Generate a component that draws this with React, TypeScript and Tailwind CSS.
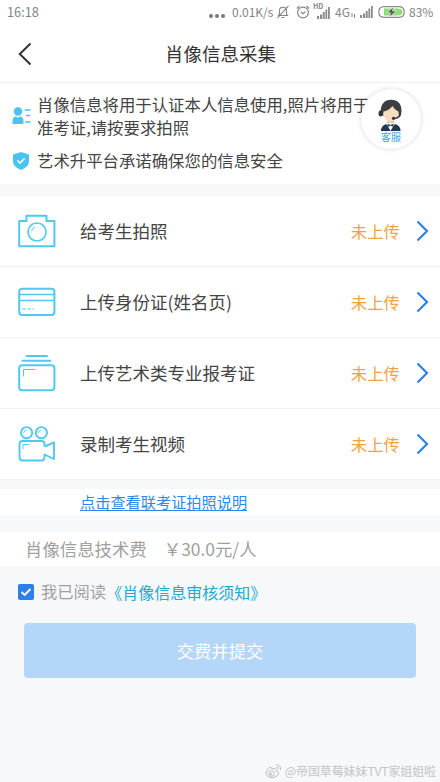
const items = [
  { title: '给考生拍照', icon: CameraIcon },
  { title: '上传身份证(姓名页)', icon: CardIcon },
  { title: '上传艺术类专业报考证', icon: FolderIcon },
  { title: '录制考生视频', icon: VideoIcon },
]

function CameraIcon() {
  return (
    <svg width="38" height="34" viewBox="0 0 38 34" fill="none" stroke="#52c8ee" strokeWidth="2" strokeLinejoin="round">
      <path d="M1.2 7H8.5V1.8H28.5V7H36.4V32.3H1.2Z" />
      <circle cx="19" cy="18" r="9" strokeWidth="1.6" />
      <path d="M13.6 17Q14.4 13.7 17 13.1" strokeWidth="1" />
    </svg>
  )
}

function CardIcon() {
  return (
    <svg width="38" height="30" viewBox="0 0 38 30" fill="none" stroke="#52c8ee" strokeWidth="2">
      <rect x="1.2" y="1.8" width="35.2" height="26.2" rx="3" />
      <path d="M1 7.5H37M1 13.5H37" strokeWidth="1.3" />
      <path d="M4 22H8M9.5 22H13M14.5 22H16" strokeWidth="1.2" />
    </svg>
  )
}

function FolderIcon() {
  return (
    <svg width="38" height="38" viewBox="0 0 38 38" fill="none" stroke="#52c8ee" strokeWidth="2" strokeLinecap="round">
      <path d="M8.5 2H29M4.5 6.7H32.5" strokeWidth="1.9" />
      <rect x="1.2" y="11.2" width="35.2" height="25" rx="3" />
      <path d="M5.5 22V15.5H17" strokeWidth="1" />
    </svg>
  )
}

function VideoIcon() {
  return (
    <svg width="38" height="36" viewBox="0 0 38 36" fill="none" stroke="#52c8ee" strokeWidth="1.9" strokeLinejoin="round">
      <circle cx="8.6" cy="6.7" r="5.6" />
      <circle cx="23.4" cy="6.7" r="5.6" />
      <path d="M26.5 20.5V18Q26.5 15 23.5 15H4.5Q1.5 15 1.5 18V31Q1.5 34.5 4.5 34.5H23.5Q26.5 34.5 26.5 31.5V28.5L36 33V16.5L26.5 20.5" />
      <path d="M5.5 7Q6 4.5 8.5 4M20 7Q20.5 4.5 23 4M5 23V18.5H11" strokeWidth="1" />
    </svg>
  )
}

function Signal() {
  return (
    <svg width="13" height="12" viewBox="0 0 13 12" fill="#8b8b8b">
      <path d="M0 9h2v3H0zM3 7.5h2V12H3zM5.7 5h2v7h-2zM8.4 2.5h1.8V12H8.4zM11 0h1.8v12H11z" />
    </svg>
  )
}

function StatusBar() {
  return (
    <div className="flex h-6 items-center pl-[7px] text-xs text-[#858585]">
      <span className="w-[202px] text-[12.8px]">16:18</span>
      <span className="flex w-[23px] gap-[2px] pt-[7px]">
        <i className="size-[4px] rounded-full bg-[#777]" />
        <i className="size-[4px] rounded-full bg-[#777]" />
        <i className="size-[4px] rounded-full bg-[#777]" />
      </span>
      <span className="w-11 whitespace-nowrap">0.01K/s</span>
      <svg width="14" height="14" viewBox="0 0 13 14" fill="none" stroke="#858585" strokeWidth="1.1">
        <path d="M2 10.5H11L10 9V5.5Q10 2.2 6.5 2.2Q3 2.2 3 5.5V9ZM5 12.5H8M12 .8L1 12.8" />
      </svg>
      <svg className="ml-[6px]" width="14" height="14" viewBox="0 0 14 14" fill="none" stroke="#858585" strokeWidth="1.2">
        <circle cx="7" cy="7.5" r="5.4" />
        <path d="M.8 3.5L3.5 1M10.5 1L13.2 3.5M4.8 6.8L7 8.8L9.3 6.6" />
      </svg>
      <span className="ml-[3px] flex h-5 w-[17px] flex-col items-end">
        <span className="h-[5px] self-start text-[7px] leading-[8px] font-bold">HD</span>
        <Signal />
      </span>
      <span className="ml-[5px] w-[15px]">4G</span>
      <svg className="mt-[6px] mr-1 ml-px" width="5" height="5" viewBox="0 0 5 5" stroke="#858585">
        <path d="M1 0V4M3.5 1V5" />
      </svg>
      <Signal />
      <svg className="ml-[5px]" width="27" height="12" viewBox="0 0 27 12">
        <path d="M6 .7H21Q26.2 .7 26.2 6T21 11.3H6Q.8 11.3 .8 6T6 .7Z" fill="#fff" stroke="#8a8a8a" strokeWidth="1.2" />
        <path d="M6 2.5H20Q24.5 2.5 24.5 6T20 9.5H6Z" fill="#8bdf76" />
        <path d="M15.5 .8L9 6.8H12.5L11 11.2L18.5 5H14.5Z" fill="#555" stroke="#fff" strokeWidth=".6" />
      </svg>
      <span className="ml-[4px]">83%</span>
    </div>
  )
}

function ServiceButton() {
  return (
    <div className="absolute top-[6px] right-[19px] flex size-[60px] flex-col items-center rounded-full bg-white pt-[10px] shadow-[0_0_5px_rgba(0,0,0,0.16)]">
      <svg width="26" height="32" viewBox="0 0 26 32">
        <path d="M9 19H16V26L12.5 29L9 26Z" fill="#f0c8a3" />
        <path d="M5 11Q11 11 14.5 6.5Q16.5 10.5 20.5 12Q21 17 17.5 20.5Q13 24.5 9 21.5Q5 18 5 11Z" fill="#f8dcc0" />
        <path d="M2.5 13Q3 1 13 .8Q23.5 1 23.5 12Q23.5 16.5 20.5 18.5Q21 14.5 20.3 12.5Q16.5 11 14.5 7Q11 11.5 5.5 12.5Q5 15 5.5 17Q2.5 16 2.5 13Z" fill="#3c3e44" />
        <path d="M3 32Q3 26.5 8.5 25L12.5 29L17 25Q22.5 26.5 22.5 32Z" fill="#20394f" />
        <path d="M8.8 25L12.5 32L16.5 25L14.5 24H10.5Z" fill="#fff" />
        <path d="M9.8 24.5L12.5 26L15.5 24.5V28L12.5 26.8L9.8 28Z" fill="#334f67" />
        <rect x=".6" y="11.5" width="4" height="6" rx="2" fill="#30333a" />
        <path d="M22.5 15Q21.5 19 16 19.5" fill="none" stroke="#30333a" strokeWidth="1.2" />
        <circle cx="15.5" cy="19.3" r="1.6" fill="#30333a" />
      </svg>
      <span className="text-[10px] leading-[12px] text-[#38a8d8]">客服</span>
    </div>
  )
}

function Notice() {
  return (
    <section className="relative h-[101px] bg-white pt-[10px] pl-3 text-[16.4px] leading-[23px] text-[#444]">
      <div className="flex items-center">
        <svg className="mr-[6px] shrink-0" width="19" height="18" viewBox="0 0 19 18" fill="#49c3ef">
          <circle cx="6" cy="4.5" r="4.2" />
          <path d="M.5 17V14Q.5 9.5 4.5 9.5L6 11L7.5 9.5Q11.5 9.5 11.5 14V15.5Q11.5 17 10 17Z" />
          <path d="M12.5 3H18.5M14 8.5H18.5M13 15H18.5" stroke="#49c3ef" strokeWidth="1.3" />
        </svg>
        <p className="whitespace-nowrap">
          肖像信息将用于认证本人信息使用,照片将用于
          <br />
          准考证,请按要求拍照
        </p>
      </div>
      <div className="mt-[10px] flex items-center">
        <svg className="mr-[8px] ml-px" width="16" height="18" viewBox="0 0 16 18">
          <path d="M8 0L16 2.5V9Q16 15 8 18Q0 15 0 9V2.5Z" fill="#49c3ef" />
          <path d="M4.5 8.5L7 11L11.5 6.5" fill="none" stroke="#fff" strokeWidth="1.6" />
        </svg>
        <p>艺术升平台承诺确保您的信息安全</p>
      </div>
      <ServiceButton />
    </section>
  )
}

function Watermark() {
  return (
    <div className="mt-auto flex h-[22px] items-center justify-end gap-[3px] pr-[4px] text-[12px] text-[#c3c5c8]">
      <svg width="17" height="15" viewBox="0 0 17 15" fill="none" stroke="#bbbdc0">
        <path d="M7 4Q4 2 1.5 7Q-.5 11 3.5 13Q8 15 12 12Q16 8 11 7Q12 3.5 7 5Z" />
        <circle cx="6.5" cy="9.5" r="2.8" />
        <circle cx="6" cy="10" r=".8" fill="#bbbdc0" />
        <path d="M11 1Q16 .5 15.5 6M11 3.5Q13.5 3 13.3 5.5" />
      </svg>
      <span className="tracking-[-0.1px] whitespace-nowrap">@帝国草莓妹妹TVT家姐姐啦</span>
    </div>
  )
}

export default function App() {
  return (
    <main className="flex h-[782px] w-[440px] flex-col overflow-hidden bg-[#f6f8fa] font-['Noto_Sans_CJK_SC','Noto_Sans',sans-serif]">
      <div className="h-[83px] border-b border-[#f2f2f2] bg-white">
        <StatusBar />
        <header className="flex h-[59px] items-center pl-[18px]">
          <svg width="14" height="24" viewBox="0 0 14 24" fill="none" stroke="#333" strokeWidth="2">
            <path d="M12.5 1.5L1.8 12L12.5 22.5" />
          </svg>
          <h1 className="ml-[133px] text-[18.5px] text-[#333]">肖像信息采集</h1>
        </header>
      </div>

      <Notice />

      <ul className="mt-[11px] border-t border-[#f3f4f5] bg-white">
        {items.map(({ title, icon: Icon }) => (
          <li key={title} className="flex h-[71px] items-center border-b border-[#f1f2f3] pl-[18px]">
            <Icon />
            <span className="ml-6 flex-1 text-[17.5px] text-[#444]">{title}</span>
            <span className="text-[16.4px] text-[#f2a23f]">未上传</span>
            <svg className="mr-[11px] ml-4" width="13" height="22" viewBox="0 0 13 22" fill="none" stroke="#2e80ea" strokeWidth="2.2">
              <path d="M1.5 1.5L11 11L1.5 20.5" />
            </svg>
          </li>
        ))}
      </ul>

      <div className="mt-[9px] h-[26px] bg-white pl-20 text-[15.2px] leading-[25px] text-[#2f88e8]">
        <a className="underline underline-offset-2">点击查看联考证拍照说明</a>
      </div>

      <div className="mt-[17px] flex h-[34px] items-center bg-white pl-[25px] text-[17.4px] text-[#a0a0a0]">
        <span>肖像信息技术费</span>
        <span className="ml-[17px]">￥30.0元/人</span>
      </div>

      <div className="mt-[14px] flex h-[23px] items-center pl-[18px] text-[16.3px] text-[#a0a0a0]">
        <svg className="mr-[7px]" width="16" height="16" viewBox="0 0 16 16">
          <rect width="16" height="16" rx="2" fill="#2c80ea" />
          <path d="M3.5 8L6.7 11L12.5 5" fill="none" stroke="#fff" strokeWidth="1.8" />
        </svg>
        <span>我已阅读</span>
        <a className="text-[16px] text-[#23a9d1]">《肖像信息审核须知》</a>
      </div>

      <button className="mx-6 mt-5 h-[55px] rounded-[4px] bg-[#b4d6f9] text-[17.3px] text-white">交费并提交</button>

      <Watermark />
    </main>
  )
}
